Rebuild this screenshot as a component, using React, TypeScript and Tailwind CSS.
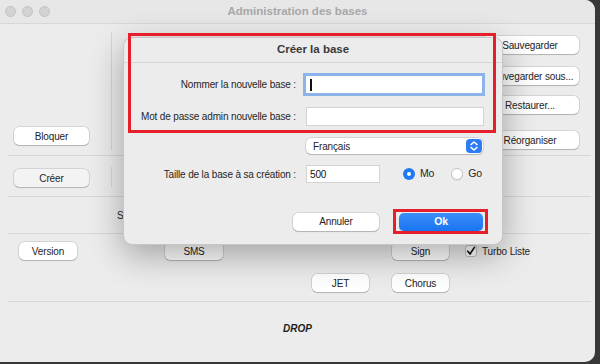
import React from 'react';

interface BtnProps {
  label: string;
  className?: string;
}

const Btn: React.FC<BtnProps> = ({ label, className = '' }) => (
  <div
    className={`h-[18px] rounded-[5px] flex items-center justify-center text-[10px] tracking-[-0.15px] text-[#242424] shadow-[0_0_0_0.5px_rgba(0,0,0,0.2),0_1px_1px_rgba(0,0,0,0.16)] whitespace-nowrap overflow-hidden ${className}`}
  >
    {label}
  </div>
);

const Divider = () => <div className="h-px bg-[#d8d8d8] ml-[8px] mr-[4px]" />;

const CreateDialog = () => (
  <div className="absolute left-[123px] top-[37px] w-[380px] h-[208px] rounded-[9px] bg-[#ececec] border border-[#c6c6c6] shadow-[0_10px_34px_rgba(0,0,0,0.32)] flex flex-col text-[10px] tracking-[-0.15px] text-[#262626]">
    <div className="h-[25px] flex items-center justify-center border-b border-[#d6d6d6] text-[11.5px] tracking-normal font-bold text-[#3a3a3a]">
      Créer la base
    </div>

    {/* nom */}
    <div className="flex items-center mt-[13px] h-[17px]">
      <div className="w-[172px] text-right">Nommer la nouvelle base :</div>
      <div className="ml-[10px] w-[176px] h-[17px] bg-white ring-[3px] ring-[#8cb3ea] flex items-center">
        <span className="ml-[4px] w-[2px] h-[12px] bg-[#111]" />
      </div>
    </div>

    {/* mot de passe */}
    <div className="flex items-center mt-[14px] h-[19px]">
      <div className="w-[172px] text-right whitespace-nowrap">Mot de passe admin nouvelle base :</div>
      <div className="ml-[10px] w-[178px] h-[19px] bg-white border border-[#d3d3d3]" />
    </div>

    {/* langue */}
    <div className="flex items-center mt-[12px] h-[16px] pl-[182px]">
      <div className="w-[177px] h-[16px] rounded-[5px] bg-white shadow-[0_0_0_0.5px_rgba(0,0,0,0.2),0_1px_1px_rgba(0,0,0,0.15)] flex items-center justify-between pl-[7px] pr-[1px]">
        <span>Français</span>
        <svg width="16" height="14" viewBox="0 0 16 14">
          <rect x="0" y="0" width="16" height="14" rx="4" fill="#2c7cf6" />
          <path d="M5 5.6 L8 3 L11 5.6" stroke="white" strokeWidth="1.4" fill="none" strokeLinecap="round" strokeLinejoin="round" />
          <path d="M5 8.4 L8 11 L11 8.4" stroke="white" strokeWidth="1.4" fill="none" strokeLinecap="round" strokeLinejoin="round" />
        </svg>
      </div>
    </div>

    {/* taille */}
    <div className="flex items-center mt-[11px] h-[18px]">
      <div className="w-[172px] text-right">Taille de la base à sa création :</div>
      <div className="ml-[10px] w-[74px] h-[18px] bg-white border border-[#d3d3d3] flex items-center pl-[3px] text-[#111]">
        500
      </div>
      <div className="ml-[23px] w-[12px] h-[12px] rounded-full bg-[#1f7bf5] flex items-center justify-center">
        <span className="w-[4px] h-[4px] rounded-full bg-white" />
      </div>
      <span className="ml-[5px] text-[10.5px]">Mo</span>
      <div className="ml-[17px] w-[12px] h-[12px] rounded-full bg-white border border-[#c4c4c4] shadow-[0_1px_1px_rgba(0,0,0,0.08)]" />
      <span className="ml-[5px] text-[10.5px]">Go</span>
    </div>

    {/* boutons */}
    <div className="flex items-center mt-[29px] h-[19px]">
      <Btn label="Annuler" className="ml-[169px] w-[86px] bg-white" />
      <div className="ml-[20px] w-[84px] h-[18px] rounded-[5px] bg-gradient-to-b from-[#3b8ff8] to-[#1774f3] flex items-center justify-center text-[10.5px] font-bold text-white shadow-[0_1px_1px_rgba(0,0,0,0.18)]">
        Ok
      </div>
    </div>
  </div>
);

export default function App() {
  return (
    <div className="w-[600px] h-[364px] bg-[#383838] font-['Liberation_Sans',Arial,sans-serif]">
      <div className="relative w-[595px] h-[362px] bg-[#ececec] rounded-r-[10px] overflow-hidden flex flex-col">
        {/* title bar */}
        <div className="h-[24px] shrink-0 flex items-center bg-[#e7e7e7] border-b border-[#d7d7d7]">
          <div className="w-[60px] flex gap-[6px] pl-[5px]">
            <span className="w-[11px] h-[11px] rounded-full bg-[#d3d3d3] border border-[#c3c3c3]" />
            <span className="w-[11px] h-[11px] rounded-full bg-[#d3d3d3] border border-[#c3c3c3]" />
            <span className="w-[11px] h-[11px] rounded-full bg-[#d3d3d3] border border-[#c3c3c3]" />
          </div>
          <div className="flex-1 text-center text-[11.5px] font-bold text-[#a8a8a8]">Administration des bases</div>
          <div className="w-[60px]" />
        </div>

        {/* section 1 */}
        <div className="h-[131px] shrink-0 flex">
          <div className="w-[111px] flex items-end pb-[10px] pl-[14px]">
            <Btn label="Bloquer" className="w-[75px] bg-white" />
          </div>
          <div className="w-px bg-[#d6d6d6] mt-[8px] mb-[5px]" />
          <div className="flex-1" />
          <div className="w-[98px] mr-[16px] flex flex-col pt-[12px]">
            <Btn label="Sauvegarder" className="bg-white" />
            <Btn label="Sauvegarder sous..." className="mt-[13px] bg-white" />
            <Btn label="Restaurer..." className="mt-[11px] bg-white" />
            <Btn label="Réorganiser" className="mt-[17px] bg-white" />
          </div>
        </div>
        <Divider />

        {/* section 2 */}
        <div className="h-[40px] shrink-0 flex">
          <div className="w-[111px] pl-[14px] pt-[13px]">
            <Btn label="Créer" className="w-[75px] bg-[#f3f3f3]" />
          </div>
          <div className="w-px h-[20px] mt-[11px] bg-[#d6d6d6]" />
        </div>
        <Divider />

        {/* section 3 */}
        <div className="h-[36px] shrink-0 flex items-center pl-[117px] text-[10px] text-[#262626]">Statistiques</div>
        <Divider />

        {/* section 4 */}
        <div className="h-[67px] shrink-0 flex flex-col">
          <div className="flex items-center mt-[8px] h-[18px]">
            <Btn label="Version" className="ml-[19px] w-[58px] bg-white" />
            <Btn label="SMS" className="ml-[88px] w-[58px] bg-white" />
            <Btn label="Sign" className="ml-[169px] w-[57px] bg-white" />
            <div className="ml-[16px] w-[12px] h-[12px] rounded-[3px] bg-white border border-[#bdbdbd] flex items-center justify-center">
              <svg width="10" height="10" viewBox="0 0 10 10">
                <path d="M1.8 5.2 L4 8 L8.4 1.4" stroke="#111" strokeWidth="1.7" fill="none" strokeLinecap="round" strokeLinejoin="round" />
              </svg>
            </div>
            <span className="ml-[5px] text-[10px] tracking-[-0.15px] text-[#262626]">Turbo Liste</span>
          </div>
          <div className="flex items-center mt-[14px] h-[18px]">
            <Btn label="JET" className="ml-[312px] w-[57px] bg-white" />
            <Btn label="Chorus" className="ml-[23px] w-[57px] bg-white" />
          </div>
        </div>
        <Divider />

        {/* section 5 */}
        <div className="flex-1 flex items-center justify-center pb-[7px] text-[10px] font-bold italic text-[#1e1e1e]">
          DROP
        </div>

        <CreateDialog />

        {/* annotations */}
        <div className="absolute left-[128px] top-[33px] w-[368px] h-[100px] border-[3px] border-[#e6202a]" />
        <div className="absolute left-[393px] top-[209px] w-[95px] h-[25px] border-[3px] border-[#e6202a]" />
      </div>
    </div>
  );
}
